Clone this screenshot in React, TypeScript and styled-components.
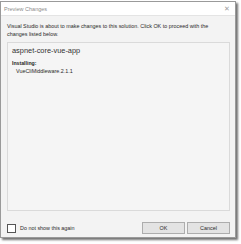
import React from 'react';
import styled, { createGlobalStyle } from 'styled-components';

const GlobalStyle = createGlobalStyle`
  html, body {
    margin: 0;
    padding: 0;
    background: #ffffff;
  }
  body {
    font-family: "Liberation Sans", Arial, sans-serif;
  }
`;

const Page = styled.div`
  width: 241px;
  height: 244px;
  padding: 1px 0 0 0;
  box-sizing: border-box;
`;

const Window = styled.div`
  width: 236px;
  height: 237px;
  box-sizing: border-box;
  border: 1px solid #9a9a9a;
  background: #f3f3f3;
  box-shadow: 2px 2px 2px rgba(0, 0, 0, 0.55);
  display: flex;
  flex-direction: column;
`;

const TitleBar = styled.div`
  height: 13px;
  background: #ffffff;
  border-bottom: 1px solid #e4e4e4;
  display: flex;
  align-items: center;
  justify-content: space-between;
  padding: 0 5px 0 3px;
  font-size: 5.5px;
  color: #8c8c8c;
`;

const Close = styled.span`
  font-size: 7px;
  color: #a0a0a0;
  line-height: 1;
`;

const Body = styled.div`
  flex: 1;
  display: flex;
  flex-direction: column;
  padding: 6px 5px 0 6px;
`;

const Message = styled.p`
  margin: 0;
  font-size: 5.4px;
  line-height: 8px;
  color: #2a2a2a;
`;

const ChangesBox = styled.div`
  margin-top: 4px;
  height: 169px;
  box-sizing: border-box;
  border: 1px solid #dadada;
  background: #f5f5f5;
  padding: 3px 4px;
`;

const Project = styled.div`
  font-size: 7.4px;
  color: #333333;
  line-height: 10px;
`;

const Label = styled.div`
  margin-top: 3px;
  font-size: 5.2px;
  font-weight: bold;
  color: #1e1e1e;
  line-height: 8px;
`;

const Item = styled.div`
  padding-left: 4px;
  font-size: 5.4px;
  color: #2a2a2a;
  line-height: 8px;
`;

const Footer = styled.div`
  display: flex;
  align-items: center;
  margin-top: 11px;
`;

const CheckRow = styled.label`
  display: flex;
  align-items: center;
  gap: 4px;
  flex: 1;
  font-size: 5.4px;
  color: #2a2a2a;
`;

const Box = styled.span`
  width: 7px;
  height: 7px;
  border: 1px solid #555555;
  background: #ffffff;
`;

const Button = styled.button`
  width: 43px;
  height: 12px;
  margin-left: 2px;
  padding: 0;
  box-sizing: border-box;
  border: 1px solid #adadad;
  background: #e3e3e3;
  font-family: "Liberation Sans", Arial, sans-serif;
  font-size: 5.4px;
  color: #2a2a2a;
`;

export default function App() {
  return (
    <Page>
      <GlobalStyle />
      <Window>
        <TitleBar>
          <span>Preview Changes</span>
          <Close>✕</Close>
        </TitleBar>
        <Body>
          <Message>
            Visual Studio is about to make changes to this solution. Click OK to proceed with the
            changes listed below.
          </Message>
          <ChangesBox>
            <Project>aspnet-core-vue-app</Project>
            <Label>Installing:</Label>
            <Item>VueCliMiddleware.2.1.1</Item>
          </ChangesBox>
          <Footer>
            <CheckRow>
              <Box />
              Do not show this again
            </CheckRow>
            <Button>OK</Button>
            <Button>Cancel</Button>
          </Footer>
        </Body>
      </Window>
    </Page>
  );
}
